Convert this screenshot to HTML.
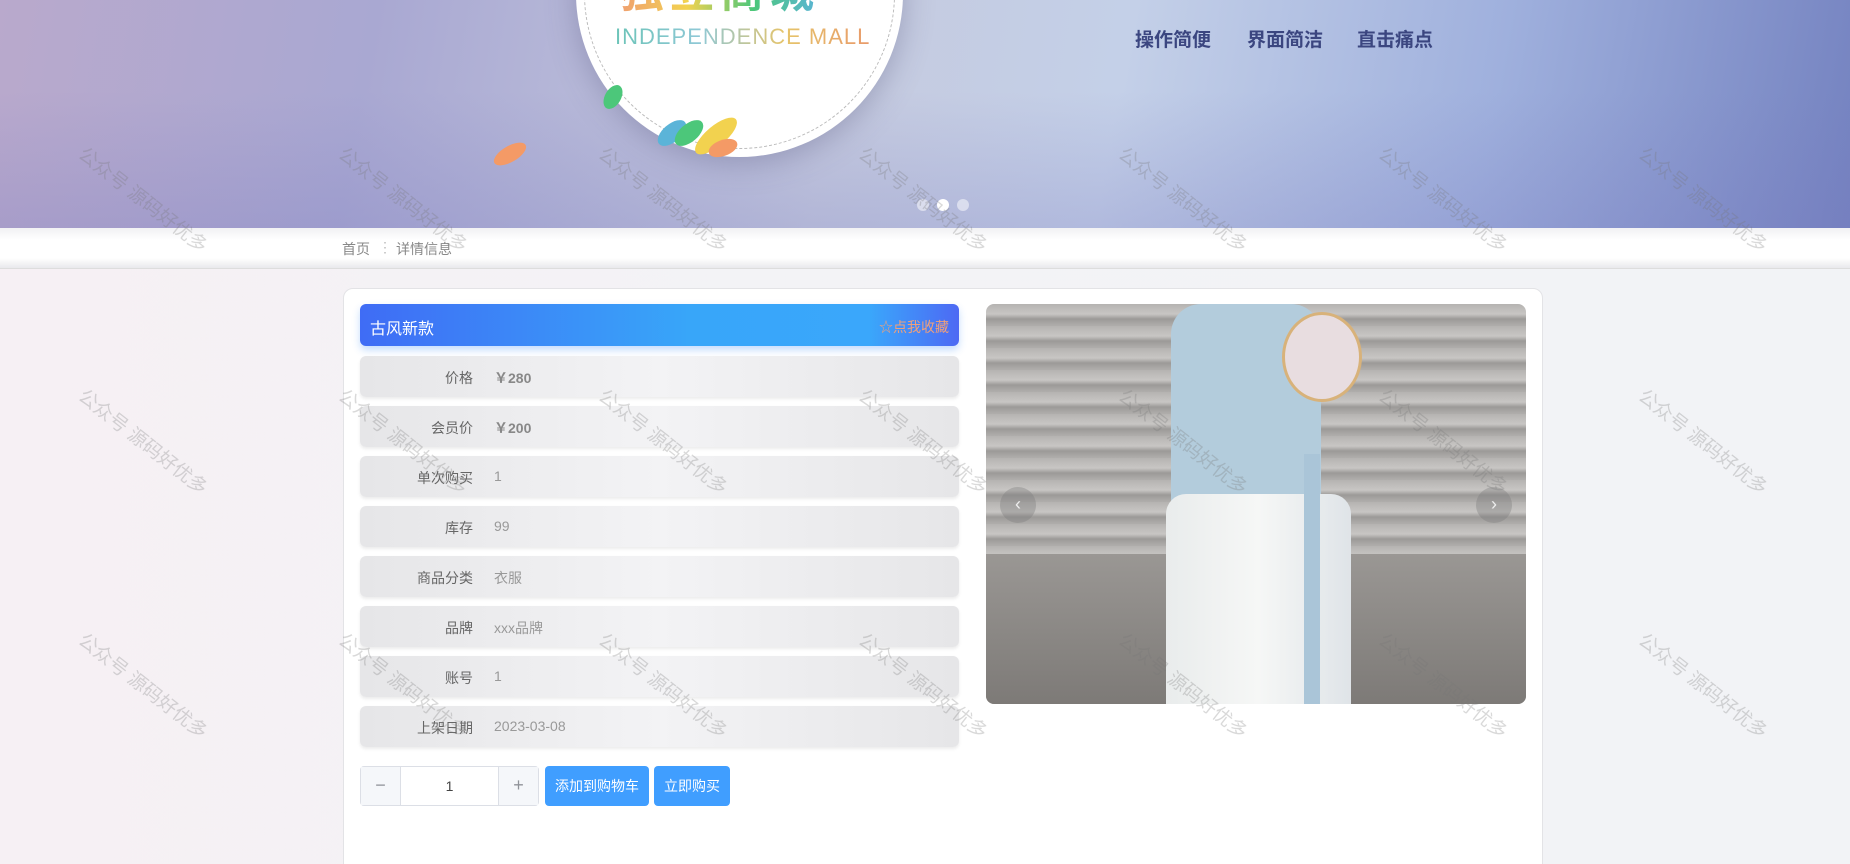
<!DOCTYPE html>
<html><head><meta charset="utf-8"><style>
*{margin:0;padding:0;box-sizing:border-box}
html{width:1850px;height:864px;overflow:hidden}
body{width:1850px;height:864px;overflow:hidden;position:relative;font-family:"Liberation Sans","Noto Sans CJK SC",sans-serif;background:linear-gradient(90deg,#f6f0f4,#f3f3f6 40%,#f2f3f6);}
.banner{position:absolute;left:0;top:0;width:1850px;height:228px;background:linear-gradient(100deg,#b9a9cc 0%,#a9a8d2 20%,#c5cadf 45%,#c4d0e8 60%,#9fb0dd 80%,#7482c0 100%);overflow:hidden}
.banner:after{content:"";position:absolute;left:0;top:0;right:0;bottom:0;background:linear-gradient(180deg,rgba(255,255,255,0) 40%,rgba(120,120,190,.25))}
.circle{position:absolute;left:576px;top:-170px;width:327px;height:327px;border-radius:50%;background:#fff;box-shadow:0 6px 30px rgba(80,80,120,.35);z-index:2}
.circle:before{content:"";position:absolute;left:8px;top:8px;right:8px;bottom:8px;border-radius:50%;border:1px dashed #bbb}
.mall{position:absolute;left:615px;top:24px;font-size:22px;letter-spacing:1px;z-index:3;background:linear-gradient(90deg,#6cc4b8,#8fc8d6,#e6c46a,#e89a6a);-webkit-background-clip:text;color:transparent}
.big{position:absolute;left:620px;top:-44px;font-size:44px;font-weight:bold;z-index:3;background:linear-gradient(90deg,#f0a070,#f2d24f,#4cc77a,#5bb4d8);-webkit-background-clip:text;color:transparent;letter-spacing:6px}
.nav{position:absolute;top:25px;font-size:19px;font-weight:bold;color:#3b4680;z-index:3}
.leaf{position:absolute;border-radius:50%;z-index:3}
.dot{position:absolute;top:199px;width:12px;height:12px;border-radius:50%;background:rgba(255,255,255,.5);z-index:3}
.crumb{position:absolute;left:0;top:228px;width:1850px;height:41px;background:linear-gradient(180deg,#f1f1f3,#fff 30%,#fff 75%,#e9e9ec);border-bottom:1px solid #ddd}
.crumb span{position:absolute;top:11px;font-size:14px;color:#888}
.card{position:absolute;left:343px;top:288px;width:1200px;height:600px;background:#fff;border:1px solid #e3e3e6;border-radius:10px}
.head{position:absolute;left:360px;top:304px;width:599px;height:42px;border-radius:6px;background:linear-gradient(90deg,#3f6cf5,#38a6f9 55%,#3aa7fb 85%,#4d69f4);box-shadow:0 4px 8px rgba(60,140,250,.3)}
.head b{position:absolute;left:10px;top:11px;color:#fff;font-size:16px;font-weight:normal}
.head i{position:absolute;right:10px;top:13px;color:#f0a07a;font-size:14px;font-style:normal}
.row{position:absolute;left:360px;width:599px;height:41px;border-radius:6px;background:linear-gradient(90deg,#e6e6e8,#f3f3f5 50%,#e6e6e8);box-shadow:0 2px 3px rgba(0,0,0,.08)}
.row .l{position:absolute;right:486px;top:12px;font-size:14px;color:#666;white-space:nowrap}
.row .v{position:absolute;left:134px;top:12px;font-size:14px;color:#999}
.row .v.b{font-weight:bold;color:#888}
.step{position:absolute;left:360px;top:766px;width:179px;height:40px;border:1px solid #dcdfe6;border-radius:4px;background:#fff}
.step .m,.step .p{position:absolute;top:0;width:40px;height:38px;background:#f5f7fa;color:#909399;font-size:18px;font-weight:300;text-align:center;line-height:36px}
.step .m{left:0;border-right:1px solid #dcdfe6}.step .p{right:0;border-left:1px solid #dcdfe6}
.step .n{position:absolute;left:40px;right:40px;top:11px;text-align:center;font-size:14px;color:#444}
.btn{position:absolute;top:766px;height:40px;background:#409eff;color:#fff;border-radius:4px;font-size:14px;text-align:center;line-height:40px}
.img{position:absolute;left:986px;top:304px;width:540px;height:400px;border-radius:8px;overflow:hidden;background:repeating-linear-gradient(180deg,#b5b3b1 0,#c8c6c4 10px,#9c9a98 15px,#b0aeac 22px)}
.img .gr{position:absolute;left:0;right:0;top:250px;bottom:0;background:linear-gradient(180deg,#9a9794,#7d7a77)}
.arr{position:absolute;top:183px;width:36px;height:36px;border-radius:50%;background:rgba(120,120,120,.35);color:#eee;text-align:center;line-height:34px;font-size:18px}
.wm{position:absolute;font-size:19px;color:rgba(120,120,120,.28);transform:rotate(38deg);transform-origin:left top;white-space:nowrap;z-index:10}
</style></head><body>
<div class="banner">
<div class="circle"></div>
<div class="big">独立商城</div>
<div class="mall">INDEPENDENCE MALL</div>
<div class="leaf" style="left:600px;top:89px;width:26px;height:16px;background:#4cc77a;transform:rotate(-60deg)"></div>
<div class="leaf" style="left:492px;top:146px;width:36px;height:16px;background:#f49a66;transform:rotate(-30deg)"></div>
<div class="leaf" style="left:655px;top:124px;width:34px;height:18px;background:#5bb4d8;transform:rotate(-40deg)"></div>
<div class="leaf" style="left:672px;top:124px;width:34px;height:18px;background:#4cc77a;transform:rotate(-40deg)"></div>
<div class="leaf" style="left:690px;top:126px;width:52px;height:20px;background:#f2d24f;transform:rotate(-40deg)"></div>
<div class="leaf" style="left:708px;top:140px;width:30px;height:16px;background:#f49a66;transform:rotate(-20deg)"></div>
<div class="nav" style="left:1135px">操作简便</div>
<div class="nav" style="left:1247px">界面简洁</div>
<div class="nav" style="left:1357px">直击痛点</div>
<div class="dot" style="left:917px"></div><div class="dot" style="left:937px;background:#fff"></div><div class="dot" style="left:957px"></div>
</div>
<div class="crumb"><span style="left:342px">首页</span><span style="left:378px;color:#bbb">⋮</span><span style="left:396px">详情信息</span></div>
<div class="card"></div>
<div class="head"><b>古风新款</b><i>☆点我收藏</i></div>
<div class="row" style="top:356px"><span class="l">价格</span><span class="v b">￥280</span></div>
<div class="row" style="top:406px"><span class="l">会员价</span><span class="v b">￥200</span></div>
<div class="row" style="top:456px"><span class="l">单次购买</span><span class="v">1</span></div>
<div class="row" style="top:506px"><span class="l">库存</span><span class="v">99</span></div>
<div class="row" style="top:556px"><span class="l">商品分类</span><span class="v">衣服</span></div>
<div class="row" style="top:606px"><span class="l">品牌</span><span class="v">xxx品牌</span></div>
<div class="row" style="top:656px"><span class="l">账号</span><span class="v">1</span></div>
<div class="row" style="top:706px"><span class="l">上架日期</span><span class="v">2023-03-08</span></div>
<div class="step"><div class="m">−</div><div class="n">1</div><div class="p">+</div></div>
<div class="btn" style="left:545px;width:104px">添加到购物车</div>
<div class="btn" style="left:654px;width:76px">立即购买</div>
<div class="img">
<div class="gr"></div>
<div style="position:absolute;left:185px;top:0;width:150px;height:210px;background:#b3ccdc;border-radius:30px 30px 10px 10px"></div>
<div style="position:absolute;left:180px;top:190px;width:185px;height:210px;background:linear-gradient(90deg,#e9ecec,#f6f7f6 50%,#dfe4e8);border-radius:20px 20px 0 0"></div>
<div style="position:absolute;left:318px;top:150px;width:16px;height:250px;background:#aac5d8"></div>
<div style="position:absolute;left:296px;top:8px;width:80px;height:90px;border-radius:50%;background:#e8dde0;border:3px solid #d8b27a"></div>
<div class="arr" style="left:14px">‹</div><div class="arr" style="right:14px">›</div>
</div>
<div class="wm" style="left:90px;top:140px">公众号 源码好优多</div>
<div class="wm" style="left:350px;top:140px">公众号 源码好优多</div>
<div class="wm" style="left:610px;top:140px">公众号 源码好优多</div>
<div class="wm" style="left:870px;top:140px">公众号 源码好优多</div>
<div class="wm" style="left:1130px;top:140px">公众号 源码好优多</div>
<div class="wm" style="left:1390px;top:140px">公众号 源码好优多</div>
<div class="wm" style="left:1650px;top:140px">公众号 源码好优多</div>
<div class="wm" style="left:90px;top:382px">公众号 源码好优多</div>
<div class="wm" style="left:350px;top:382px">公众号 源码好优多</div>
<div class="wm" style="left:610px;top:382px">公众号 源码好优多</div>
<div class="wm" style="left:870px;top:382px">公众号 源码好优多</div>
<div class="wm" style="left:1130px;top:382px">公众号 源码好优多</div>
<div class="wm" style="left:1390px;top:382px">公众号 源码好优多</div>
<div class="wm" style="left:1650px;top:382px">公众号 源码好优多</div>
<div class="wm" style="left:90px;top:626px">公众号 源码好优多</div>
<div class="wm" style="left:350px;top:626px">公众号 源码好优多</div>
<div class="wm" style="left:610px;top:626px">公众号 源码好优多</div>
<div class="wm" style="left:870px;top:626px">公众号 源码好优多</div>
<div class="wm" style="left:1130px;top:626px">公众号 源码好优多</div>
<div class="wm" style="left:1390px;top:626px">公众号 源码好优多</div>
<div class="wm" style="left:1650px;top:626px">公众号 源码好优多</div>
</body></html>
